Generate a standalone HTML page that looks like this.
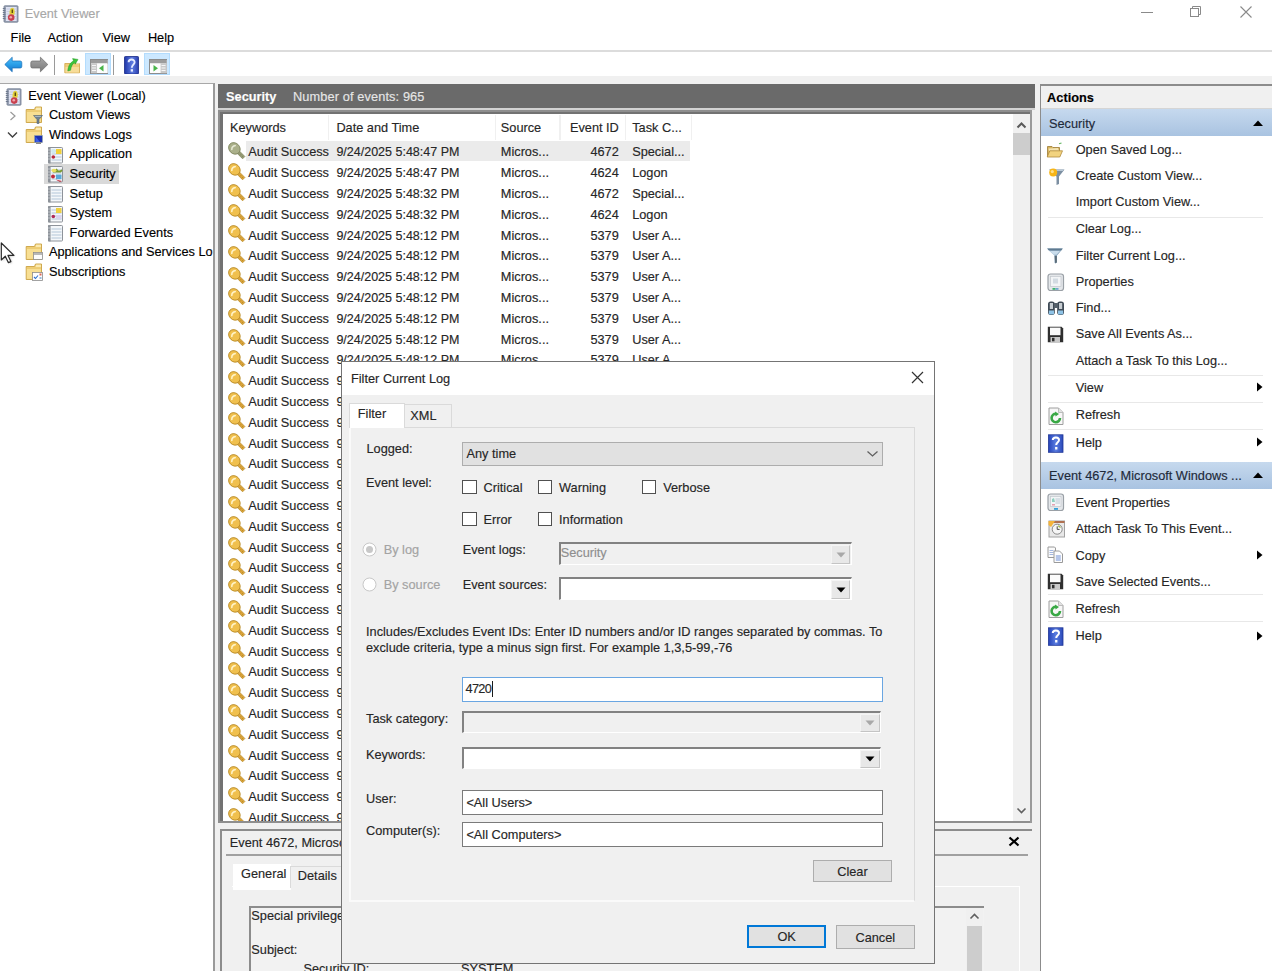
<!DOCTYPE html><html><head><meta charset="utf-8"><style>
html,body{margin:0;padding:0;}
body{width:1272px;height:971px;position:relative;overflow:hidden;background:#fff;font-family:"Liberation Sans",sans-serif;}
.a{position:absolute;box-sizing:border-box;}
.t{position:absolute;white-space:nowrap;line-height:normal;-webkit-text-stroke:0.15px currentColor;}
.clip{position:absolute;overflow:hidden;}
</style></head><body>
<svg class="a" style="left:1.7px;top:4.8px" width="17" height="18" viewBox="0 0 17 18"><rect x="2" y="0.8" width="14" height="16.4" rx="0.8" fill="#9aa3b5" stroke="#6f7a8f" stroke-width="0.8"/>
<rect x="4" y="2" width="10.6" height="14" fill="#dfe3f3"/>
<path d="M4.5 4 H14 M4.5 6.5 H14 M4.5 9 H14 M4.5 11.5 H14 M4.5 14 H14" stroke="#c3cae0" stroke-width="0.9"/>
<path d="M0.8 3.5 h2.6 M0.8 5.5 h2.6 M0.8 7.5 h2.6 M0.8 9.5 h2.6 M0.8 11.5 h2.6 M0.8 13.5 h2.6" stroke="#6f7a8f" stroke-width="1"/>
<path d="M7.8 9.8 C7.1 7 7.8 3 10.3 2.8 C12.8 3 13.1 7 12.3 9.8z" fill="#e2cf3a"/><path d="M9.6 4.5 h1.4 v3.5 h-1.4z" fill="#5a4e10"/>
<circle cx="9.2" cy="12.6" r="3.3" fill="#c8404e"/><circle cx="8.8" cy="12.2" r="1.3" fill="#f2a6ad"/></svg>
<div class="t" style="left:24.8px;top:6.00px;font-size:12.75px;color:#a8a8a8;font-weight:400;">Event Viewer</div>
<div class="a" style="left:1141px;top:12px;width:12px;height:1px;background:#8a8a8a"></div>
<svg class="a" style="left:1189px;top:5px" width="14" height="14" viewBox="0 0 14 14"><rect x="1.5" y="3.5" width="8" height="8" fill="none" stroke="#8a8a8a"/><path d="M3.5 3.5 V1.5 H11.5 V9.5 H9.5" fill="none" stroke="#8a8a8a"/></svg>
<svg class="a" style="left:1239px;top:5px" width="14" height="14" viewBox="0 0 14 14"><path d="M1.5 1.5 L12.5 12.5 M12.5 1.5 L1.5 12.5" stroke="#8a8a8a" stroke-width="1.1"/></svg>
<div class="t" style="left:10.6px;top:30.00px;font-size:12.75px;color:#000;font-weight:400;">File</div>
<div class="t" style="left:47.4px;top:30.00px;font-size:12.75px;color:#000;font-weight:400;">Action</div>
<div class="t" style="left:102.6px;top:30.00px;font-size:12.75px;color:#000;font-weight:400;">View</div>
<div class="t" style="left:147.9px;top:30.00px;font-size:12.75px;color:#000;font-weight:400;">Help</div>
<div class="a" style="left:0px;top:50px;width:1272px;height:2px;background:#dcdcdc"></div>
<svg class="a" style="left:4px;top:56px" width="19" height="18" viewBox="0 0 19 18"><defs><linearGradient id="bk" x1="0" y1="0" x2="0" y2="1"><stop offset="0" stop-color="#4fc0f8"/><stop offset="0.5" stop-color="#2a9ee8"/><stop offset="1" stop-color="#1572c8"/></linearGradient></defs><path d="M0.8 8.5 L8.2 1.2 V5 H16.2 Q17.8 5 17.8 6.8 V10.4 Q17.8 12 16.2 12 H8.2 V15.8 Z" fill="url(#bk)" stroke="#1b6fb8" stroke-width="0.7"/></svg>
<svg class="a" style="left:29.5px;top:56px" width="19" height="18" viewBox="0 0 19 18"><defs><linearGradient id="fw" x1="0" y1="0" x2="0" y2="1"><stop offset="0" stop-color="#a8a8a8"/><stop offset="1" stop-color="#7a7a7a"/></linearGradient></defs><path d="M17.8 8.5 L10.4 1.2 V5 H2.4 Q0.8 5 0.8 6.8 V10.4 Q0.8 12 2.4 12 H10.4 V15.8 Z" fill="url(#fw)" stroke="#6a6a6a" stroke-width="0.7"/></svg>
<div class="a" style="left:54px;top:55px;width:1.2px;height:19.5px;background:#9a9a9a"></div>
<svg class="a" style="left:64px;top:56px" width="17" height="18" viewBox="0 0 17 18"><path d="M0.8 7.5 H15.5 V16.8 H0.8z" fill="#f0cd78" stroke="#cfa548" stroke-width="0.8"/><rect x="1.5" y="11" width="13.5" height="5.5" fill="#f7dc98"/><path d="M12 7.5 h3.5" stroke="#e9d9a9" stroke-width="1.2"/><path d="M3.8 15 C4.2 9.5 6.5 6.5 9.5 4.8 L8.6 2.6 L14 3.4 L11.2 8.2 L10.5 6.4 C8.4 8 7 10.8 6.6 14.2z" fill="#3cc43c" stroke="#259a25" stroke-width="0.5"/></svg>
<div class="a" style="left:85.2px;top:52.8px;width:25.8px;height:22.7px;background:#cce8ff;border:1px solid #b3dcfd"></div>
<svg class="a" style="left:89.5px;top:58.5px" width="18.5" height="15" viewBox="0 0 18.5 15"><rect x="0.5" y="0.5" width="17.5" height="14" fill="#f4f4f4" stroke="#8c8c8c"/><rect x="1" y="1" width="16.5" height="3.2" fill="#9c9c9c"/><rect x="1" y="4.2" width="6" height="10" fill="#c9c9c9"/><path d="M2 6.5 h4 M2 9 h4 M2 11.5 h4" stroke="#f6f6f6" stroke-width="1"/><rect x="7.2" y="4.8" width="10.3" height="9.2" fill="#fdfdfd"/><path d="M13.5 6 L9 9.3 L13.5 12.6z" fill="#49b449"/></svg>
<div class="a" style="left:113px;top:55px;width:1.2px;height:19.5px;background:#9a9a9a"></div>
<svg class="a" style="left:123.5px;top:55.5px" width="15" height="18.5" viewBox="0 0 15 18.5"><defs><linearGradient id="hq" x1="0" x2="1"><stop offset="0" stop-color="#1f36a8"/><stop offset="0.55" stop-color="#5d7be0"/><stop offset="1" stop-color="#2a3fae"/></linearGradient></defs><rect x="0.5" y="0.5" width="14" height="17.5" rx="0.8" fill="url(#hq)" stroke="#182a86" stroke-width="0.8"/><path d="M4.6 6.2 C4.6 2.6 10.6 2.6 10.6 6.2 C10.6 8.6 7.8 8.6 7.8 11.8" fill="none" stroke="#e6ecff" stroke-width="1.9"/><rect x="6.7" y="13.2" width="2.3" height="2.4" fill="#e6ecff"/></svg>
<div class="a" style="left:144.2px;top:52.8px;width:25.5px;height:22.7px;background:#cce8ff;border:1px solid #b3dcfd"></div>
<svg class="a" style="left:148.5px;top:58.5px" width="18.5" height="15" viewBox="0 0 18.5 15"><rect x="0.5" y="0.5" width="17.5" height="14" fill="#f4f4f4" stroke="#8c8c8c"/><rect x="1" y="1" width="16.5" height="3.2" fill="#9c9c9c"/><rect x="11.5" y="4.2" width="6" height="10" fill="#c9c9c9"/><path d="M12.5 6.5 h4 M12.5 9 h4 M12.5 11.5 h4" stroke="#f6f6f6" stroke-width="1"/><rect x="1" y="4.8" width="10.3" height="9.2" fill="#fdfdfd"/><path d="M4.5 6 L9 9.3 L4.5 12.6z" fill="#49b449"/></svg>
<div class="a" style="left:0px;top:76px;width:1272px;height:895px;background:#f0f0f0"></div>
<div class="a" style="left:0px;top:83px;width:215px;height:888px;background:#fff;border-top:1px solid #a8a8a8;border-right:2px solid #9a9a9a"></div>
<svg class="a" style="left:4.5px;top:87.5px" width="17" height="18" viewBox="0 0 17 18"><rect x="2" y="0.8" width="14" height="16.4" rx="0.8" fill="#9aa3b5" stroke="#6f7a8f" stroke-width="0.8"/>
<rect x="4" y="2" width="10.6" height="14" fill="#dfe3f3"/>
<path d="M4.5 4 H14 M4.5 6.5 H14 M4.5 9 H14 M4.5 11.5 H14 M4.5 14 H14" stroke="#c3cae0" stroke-width="0.9"/>
<path d="M0.8 3.5 h2.6 M0.8 5.5 h2.6 M0.8 7.5 h2.6 M0.8 9.5 h2.6 M0.8 11.5 h2.6 M0.8 13.5 h2.6" stroke="#6f7a8f" stroke-width="1"/>
<path d="M7.8 9.8 C7.1 7 7.8 3 10.3 2.8 C12.8 3 13.1 7 12.3 9.8z" fill="#e2cf3a"/><path d="M9.6 4.5 h1.4 v3.5 h-1.4z" fill="#5a4e10"/>
<circle cx="9.2" cy="12.6" r="3.3" fill="#c8404e"/><circle cx="8.8" cy="12.2" r="1.3" fill="#f2a6ad"/></svg>
<div class="t" style="left:28.3px;top:88.00px;font-size:12.75px;color:#000;font-weight:400;">Event Viewer (Local)</div>
<svg class="a" style="left:25px;top:106.1px" width="18" height="18" viewBox="0 0 18 18"><path d="M1.2 3.5 H9.5 L10.5 1 H16.5 V16.5 H1.2 Z" fill="#f3d27c" stroke="#c9a243" stroke-width="0.9"/>
<rect x="10.9" y="1.7" width="5" height="2.4" fill="#fbeab0"/>
<path d="M1.9 5.2 H15.8 V15.8 H1.9 Z" fill="#f8df93"/>
<path d="M1.9 5.2 H15.8" stroke="#e3bf5e" stroke-width="0.8"/><path d="M8.5 9.5 H17.5 L14 13.5 V17.5 H12 V13.5 Z" fill="#6f8190" stroke="#556674" stroke-width="0.6"/><path d="M9.5 10 H16.5 L15.5 11 H10.5z" fill="#a7b7c3"/></svg>
<div class="t" style="left:48.9px;top:107.00px;font-size:12.75px;color:#000;font-weight:400;">Custom Views</div>
<svg class="a" style="left:25px;top:125.69999999999999px" width="18" height="18" viewBox="0 0 18 18"><path d="M1.2 3.5 H9.5 L10.5 1 H16.5 V16.5 H1.2 Z" fill="#f3d27c" stroke="#c9a243" stroke-width="0.9"/>
<rect x="10.9" y="1.7" width="5" height="2.4" fill="#fbeab0"/>
<path d="M1.9 5.2 H15.8 V15.8 H1.9 Z" fill="#f8df93"/>
<path d="M1.9 5.2 H15.8" stroke="#e3bf5e" stroke-width="0.8"/><rect x="9.5" y="9.5" width="8" height="7" fill="#1b2fb0" stroke="#9aa" stroke-width="0.6"/><path d="M10.5 10.5 L15 16 H10.5z" fill="#3a5ee8"/><path d="M11 17.5 H16" stroke="#8a8a8a" stroke-width="1"/></svg>
<div class="t" style="left:48.9px;top:127.00px;font-size:12.75px;color:#000;font-weight:400;">Windows Logs</div>
<svg class="a" style="left:47px;top:145.8px" width="17" height="18" viewBox="0 0 17 18"><rect x="1.5" y="1.5" width="14" height="15.5" rx="0.8" fill="#f4f7fa" stroke="#8e939a" stroke-width="1"/>
<rect x="1" y="1.2" width="2.6" height="16.2" fill="#8e939a"/>
<path d="M1 4 h2.6 M1 7 h2.6 M1 10 h2.6 M1 13 h2.6" stroke="#c9cdd2" stroke-width="0.8"/>
<path d="M4.5 5 H14.5 M4.5 8 H14.5 M4.5 11 H14.5 M4.5 14 H14.5" stroke="#b3c6d8" stroke-width="1"/><rect x="4.5" y="3" width="4" height="4" fill="#cfeaf0"/><rect x="9" y="3" width="5.5" height="5" fill="#f1d038"/><circle cx="6.3" cy="11" r="1.8" fill="#b9283c"/></svg>
<div class="t" style="left:69.6px;top:146.00px;font-size:12.75px;color:#000;font-weight:400;">Application</div>
<div class="a" style="left:44px;top:164.4px;width:75px;height:19.5px;background:#d9d9d9"></div>
<svg class="a" style="left:47px;top:165.4px" width="17" height="18" viewBox="0 0 17 18"><rect x="1.5" y="1.5" width="14" height="15.5" rx="0.8" fill="#f4f7fa" stroke="#8e939a" stroke-width="1"/>
<rect x="1" y="1.2" width="2.6" height="16.2" fill="#8e939a"/>
<path d="M1 4 h2.6 M1 7 h2.6 M1 10 h2.6 M1 13 h2.6" stroke="#c9cdd2" stroke-width="0.8"/>
<path d="M4.5 5 H14.5 M4.5 8 H14.5 M4.5 11 H14.5 M4.5 14 H14.5" stroke="#b3c6d8" stroke-width="1"/><path d="M6 6.5 L13.5 6.5 L15 5 M9 4 L11 6.5" stroke="#7a9a30" stroke-width="1.8" fill="none"/><ellipse cx="7" cy="5.5" rx="2.5" ry="1.8" fill="#e8e060"/><circle cx="6" cy="11.5" r="1.9" fill="#c0283a"/><rect x="9" y="9.5" width="5.5" height="4.5" fill="#5aaad8"/><path d="M8.5 14.5 L15 16 L13 17z" fill="#c03040"/></svg>
<div class="t" style="left:69.6px;top:166.00px;font-size:12.75px;color:#000;font-weight:400;">Security</div>
<svg class="a" style="left:47px;top:185.0px" width="17" height="18" viewBox="0 0 17 18"><rect x="1.5" y="1.5" width="14" height="15.5" rx="0.8" fill="#f4f7fa" stroke="#8e939a" stroke-width="1"/>
<rect x="1" y="1.2" width="2.6" height="16.2" fill="#8e939a"/>
<path d="M1 4 h2.6 M1 7 h2.6 M1 10 h2.6 M1 13 h2.6" stroke="#c9cdd2" stroke-width="0.8"/>
<path d="M4.5 5 H14.5 M4.5 8 H14.5 M4.5 11 H14.5 M4.5 14 H14.5" stroke="#b3c6d8" stroke-width="1"/></svg>
<div class="t" style="left:69.6px;top:186.00px;font-size:12.75px;color:#000;font-weight:400;">Setup</div>
<svg class="a" style="left:47px;top:204.60000000000002px" width="17" height="18" viewBox="0 0 17 18"><rect x="1.5" y="1.5" width="14" height="15.5" rx="0.8" fill="#f4f7fa" stroke="#8e939a" stroke-width="1"/>
<rect x="1" y="1.2" width="2.6" height="16.2" fill="#8e939a"/>
<path d="M1 4 h2.6 M1 7 h2.6 M1 10 h2.6 M1 13 h2.6" stroke="#c9cdd2" stroke-width="0.8"/>
<path d="M4.5 5 H14.5 M4.5 8 H14.5 M4.5 11 H14.5 M4.5 14 H14.5" stroke="#b3c6d8" stroke-width="1"/><rect x="9" y="3" width="5.5" height="5" fill="#efd040"/><circle cx="6.3" cy="11.5" r="1.8" fill="#b02a58"/><rect x="9" y="10" width="5.5" height="4" fill="#d9d4ef"/></svg>
<div class="t" style="left:69.6px;top:205.00px;font-size:12.75px;color:#000;font-weight:400;">System</div>
<svg class="a" style="left:47px;top:224.20000000000002px" width="17" height="18" viewBox="0 0 17 18"><rect x="1.5" y="1.5" width="14" height="15.5" rx="0.8" fill="#f4f7fa" stroke="#8e939a" stroke-width="1"/>
<rect x="1" y="1.2" width="2.6" height="16.2" fill="#8e939a"/>
<path d="M1 4 h2.6 M1 7 h2.6 M1 10 h2.6 M1 13 h2.6" stroke="#c9cdd2" stroke-width="0.8"/>
<path d="M4.5 5 H14.5 M4.5 8 H14.5 M4.5 11 H14.5 M4.5 14 H14.5" stroke="#b3c6d8" stroke-width="1"/></svg>
<div class="t" style="left:69.6px;top:225.00px;font-size:12.75px;color:#000;font-weight:400;">Forwarded Events</div>
<svg class="a" style="left:25px;top:243.3px" width="18" height="18" viewBox="0 0 18 18"><path d="M1.2 3.5 H9.5 L10.5 1 H16.5 V16.5 H1.2 Z" fill="#f3d27c" stroke="#c9a243" stroke-width="0.9"/>
<rect x="10.9" y="1.7" width="5" height="2.4" fill="#fbeab0"/>
<path d="M1.9 5.2 H15.8 V15.8 H1.9 Z" fill="#f8df93"/>
<path d="M1.9 5.2 H15.8" stroke="#e3bf5e" stroke-width="0.8"/><rect x="8.5" y="9.5" width="9" height="7" fill="#fdfdfd" stroke="#8c8c8c" stroke-width="0.8"/><rect x="9" y="10" width="8" height="2" fill="#b9b9b9"/></svg>
<div class="t" style="left:48.9px;top:244.00px;font-size:12.75px;color:#000;font-weight:400;">Applications and Services Lo</div>
<svg class="a" style="left:25px;top:262.9px" width="18" height="18" viewBox="0 0 18 18"><path d="M1.2 3.5 H9.5 L10.5 1 H16.5 V16.5 H1.2 Z" fill="#f3d27c" stroke="#c9a243" stroke-width="0.9"/>
<rect x="10.9" y="1.7" width="5" height="2.4" fill="#fbeab0"/>
<path d="M1.9 5.2 H15.8 V15.8 H1.9 Z" fill="#f8df93"/>
<path d="M1.9 5.2 H15.8" stroke="#e3bf5e" stroke-width="0.8"/><rect x="7.5" y="9.5" width="10" height="8" fill="#fdfdfd" stroke="#8c8c8c" stroke-width="0.8"/><path d="M9 14 l1.5 1.5 l2.5-3" stroke="#2d6fd0" fill="none" stroke-width="1.1"/><rect x="14.5" y="10.5" width="2" height="2" fill="#d65"/><rect x="14.5" y="14" width="2" height="2" fill="#9bd"/></svg>
<div class="t" style="left:48.9px;top:264.00px;font-size:12.75px;color:#000;font-weight:400;">Subscriptions</div>
<svg class="a" style="left:9px;top:111px" width="8" height="10" viewBox="0 0 8 10"><path d="M1.5 1 L6 5 L1.5 9" fill="none" stroke="#9a9a9a" stroke-width="1.2"/></svg>
<svg class="a" style="left:7px;top:131px" width="11" height="8" viewBox="0 0 11 8"><path d="M1 1.5 L5.5 6 L10 1.5" fill="none" stroke="#404040" stroke-width="1.4"/></svg>
<svg class="a" style="left:0px;top:241px" width="20" height="25" viewBox="0 0 20 25"><defs><filter id="cs" x="-30%" y="-30%" width="160%" height="160%"><feGaussianBlur stdDeviation="1.2"/></filter></defs><path d="M2.5 3.5 L2.5 20 L6.5 16.2 L9.5 22.5 L12 21.5 L9.2 15.3 L15 15.3 Z" fill="#000" opacity="0.25" filter="url(#cs)"/><path d="M1.3 2 L1.3 19 L5.3 15.2 L8.3 21.6 L10.9 20.6 L8 14.4 L13.9 14.4 Z" fill="#fff" stroke="#2a2a2a" stroke-width="1.2" stroke-linejoin="round"/></svg>
<div class="a" style="left:218px;top:84px;width:816.6px;height:24px;background:#6a6a6a"></div>
<div class="a" style="left:218px;top:108px;width:816.6px;height:2.2px;background:#d2d2d2"></div>
<div class="t" style="left:226.1px;top:89.00px;font-size:12.75px;color:#fff;font-weight:700;">Security</div>
<div class="t" style="left:293px;top:89.00px;font-size:12.75px;color:#e6e6e6;font-weight:400;letter-spacing:0.12px">Number of events: 965</div>
<div class="a" style="left:218px;top:110px;width:814px;height:713px;background:#8e8e8e"></div>
<div class="a" style="left:220px;top:112px;width:811px;height:709px;background:#fff;border-left:3px solid #727272;border-top:2.5px solid #727272"></div>
<div class="a" style="left:1030px;top:110px;width:2px;height:713px;background:#9a9a9a"></div>
<div class="a" style="left:327.5px;top:114.5px;width:1.5px;height:25.5px;background:#f0f0f0"></div>
<div class="a" style="left:494.8px;top:114.5px;width:1.5px;height:25.5px;background:#f0f0f0"></div>
<div class="a" style="left:559px;top:114.5px;width:1.5px;height:25.5px;background:#f0f0f0"></div>
<div class="a" style="left:624.7px;top:114.5px;width:1.5px;height:25.5px;background:#f0f0f0"></div>
<div class="a" style="left:690.5px;top:114.5px;width:1.5px;height:25.5px;background:#f0f0f0"></div>
<div class="t" style="left:230px;top:120.00px;font-size:12.75px;color:#262626;font-weight:400;">Keywords</div>
<div class="t" style="left:336.4px;top:120.00px;font-size:12.75px;color:#262626;font-weight:400;">Date and Time</div>
<div class="t" style="left:500.8px;top:120.00px;font-size:12.75px;color:#262626;font-weight:400;">Source</div>
<div class="t" style="right:653.2px;top:120.00px;font-size:12.75px;color:#262626;font-weight:400;">Event ID</div>
<div class="t" style="left:632.2px;top:120.00px;font-size:12.75px;color:#262626;font-weight:400;">Task C...</div>
<div class="clip" style="left:223px;top:140px;width:790px;height:681px">
<div class="a" style="left:22.80000000000001px;top:1.1999999999999993px;width:444.7px;height:19.5px;background:#ebebeb"></div>
<svg class="a" style="left:4.5px;top:2.0px" width="18" height="18" viewBox="0 0 18 18">
<path d="M8 10.2 L14.6 16.8 L16.9 14.5 L10.3 7.9 Z" fill="#969b75" stroke="#80865f" stroke-width="0.7"/>
<path d="M11.8 13.6 l1.4 -1.4 M13.6 15.4 l1.4 -1.4" stroke="#80865f" stroke-width="0.8"/>
<ellipse cx="6.4" cy="6.4" rx="5.3" ry="6.2" transform="rotate(-45 6.4 6.4)" fill="#aab08a" stroke="#80865f" stroke-width="0.9"/>
<path d="M3.8 7.5 Q3.8 4 7.2 3.6" stroke="#e4e7d2" stroke-width="1.6" fill="none" stroke-linecap="round"/></svg>
<div class="t" style="left:25.19999999999999px;top:4.00px;font-size:12.75px;color:#262626;font-weight:400;">Audit Success</div>
<div class="t" style="left:113.39999999999998px;top:5.00px;font-size:12.5px;color:#262626;font-weight:400;">9/24/2025 5:48:47 PM</div>
<div class="t" style="left:277.8px;top:4.00px;font-size:12.75px;color:#262626;font-weight:400;">Micros...</div>
<div class="t" style="right:394.20000000000005px;top:4.00px;font-size:12.75px;color:#262626;font-weight:400;">4672</div>
<div class="t" style="left:409.20000000000005px;top:4.00px;font-size:12.75px;color:#262626;font-weight:400;">Special...</div>
<svg class="a" style="left:4.5px;top:22.80000000000001px" width="18" height="18" viewBox="0 0 18 18">
<path d="M8 10.2 L14.6 16.8 L16.9 14.5 L10.3 7.9 Z" fill="#dba43a" stroke="#b98a26" stroke-width="0.7"/>
<path d="M11.8 13.6 l1.4 -1.4 M13.6 15.4 l1.4 -1.4" stroke="#b98a26" stroke-width="0.8"/>
<ellipse cx="6.4" cy="6.4" rx="5.3" ry="6.2" transform="rotate(-45 6.4 6.4)" fill="#f0c04e" stroke="#b98a26" stroke-width="0.9"/>
<path d="M3.8 7.5 Q3.8 4 7.2 3.6" stroke="#fff2c6" stroke-width="1.6" fill="none" stroke-linecap="round"/></svg>
<div class="t" style="left:25.19999999999999px;top:25.00px;font-size:12.75px;color:#262626;font-weight:400;">Audit Success</div>
<div class="t" style="left:113.39999999999998px;top:26.00px;font-size:12.5px;color:#262626;font-weight:400;">9/24/2025 5:48:47 PM</div>
<div class="t" style="left:277.8px;top:25.00px;font-size:12.75px;color:#262626;font-weight:400;">Micros...</div>
<div class="t" style="right:394.20000000000005px;top:25.00px;font-size:12.75px;color:#262626;font-weight:400;">4624</div>
<div class="t" style="left:409.20000000000005px;top:25.00px;font-size:12.75px;color:#262626;font-weight:400;">Logon</div>
<svg class="a" style="left:4.5px;top:43.599999999999994px" width="18" height="18" viewBox="0 0 18 18">
<path d="M8 10.2 L14.6 16.8 L16.9 14.5 L10.3 7.9 Z" fill="#dba43a" stroke="#b98a26" stroke-width="0.7"/>
<path d="M11.8 13.6 l1.4 -1.4 M13.6 15.4 l1.4 -1.4" stroke="#b98a26" stroke-width="0.8"/>
<ellipse cx="6.4" cy="6.4" rx="5.3" ry="6.2" transform="rotate(-45 6.4 6.4)" fill="#f0c04e" stroke="#b98a26" stroke-width="0.9"/>
<path d="M3.8 7.5 Q3.8 4 7.2 3.6" stroke="#fff2c6" stroke-width="1.6" fill="none" stroke-linecap="round"/></svg>
<div class="t" style="left:25.19999999999999px;top:46.00px;font-size:12.75px;color:#262626;font-weight:400;">Audit Success</div>
<div class="t" style="left:113.39999999999998px;top:47.00px;font-size:12.5px;color:#262626;font-weight:400;">9/24/2025 5:48:32 PM</div>
<div class="t" style="left:277.8px;top:46.00px;font-size:12.75px;color:#262626;font-weight:400;">Micros...</div>
<div class="t" style="right:394.20000000000005px;top:46.00px;font-size:12.75px;color:#262626;font-weight:400;">4672</div>
<div class="t" style="left:409.20000000000005px;top:46.00px;font-size:12.75px;color:#262626;font-weight:400;">Special...</div>
<svg class="a" style="left:4.5px;top:64.4px" width="18" height="18" viewBox="0 0 18 18">
<path d="M8 10.2 L14.6 16.8 L16.9 14.5 L10.3 7.9 Z" fill="#dba43a" stroke="#b98a26" stroke-width="0.7"/>
<path d="M11.8 13.6 l1.4 -1.4 M13.6 15.4 l1.4 -1.4" stroke="#b98a26" stroke-width="0.8"/>
<ellipse cx="6.4" cy="6.4" rx="5.3" ry="6.2" transform="rotate(-45 6.4 6.4)" fill="#f0c04e" stroke="#b98a26" stroke-width="0.9"/>
<path d="M3.8 7.5 Q3.8 4 7.2 3.6" stroke="#fff2c6" stroke-width="1.6" fill="none" stroke-linecap="round"/></svg>
<div class="t" style="left:25.19999999999999px;top:67.00px;font-size:12.75px;color:#262626;font-weight:400;">Audit Success</div>
<div class="t" style="left:113.39999999999998px;top:68.00px;font-size:12.5px;color:#262626;font-weight:400;">9/24/2025 5:48:32 PM</div>
<div class="t" style="left:277.8px;top:67.00px;font-size:12.75px;color:#262626;font-weight:400;">Micros...</div>
<div class="t" style="right:394.20000000000005px;top:67.00px;font-size:12.75px;color:#262626;font-weight:400;">4624</div>
<div class="t" style="left:409.20000000000005px;top:67.00px;font-size:12.75px;color:#262626;font-weight:400;">Logon</div>
<svg class="a" style="left:4.5px;top:85.19999999999999px" width="18" height="18" viewBox="0 0 18 18">
<path d="M8 10.2 L14.6 16.8 L16.9 14.5 L10.3 7.9 Z" fill="#dba43a" stroke="#b98a26" stroke-width="0.7"/>
<path d="M11.8 13.6 l1.4 -1.4 M13.6 15.4 l1.4 -1.4" stroke="#b98a26" stroke-width="0.8"/>
<ellipse cx="6.4" cy="6.4" rx="5.3" ry="6.2" transform="rotate(-45 6.4 6.4)" fill="#f0c04e" stroke="#b98a26" stroke-width="0.9"/>
<path d="M3.8 7.5 Q3.8 4 7.2 3.6" stroke="#fff2c6" stroke-width="1.6" fill="none" stroke-linecap="round"/></svg>
<div class="t" style="left:25.19999999999999px;top:88.00px;font-size:12.75px;color:#262626;font-weight:400;">Audit Success</div>
<div class="t" style="left:113.39999999999998px;top:89.00px;font-size:12.5px;color:#262626;font-weight:400;">9/24/2025 5:48:12 PM</div>
<div class="t" style="left:277.8px;top:88.00px;font-size:12.75px;color:#262626;font-weight:400;">Micros...</div>
<div class="t" style="right:394.20000000000005px;top:88.00px;font-size:12.75px;color:#262626;font-weight:400;">5379</div>
<div class="t" style="left:409.20000000000005px;top:88.00px;font-size:12.75px;color:#262626;font-weight:400;">User A...</div>
<svg class="a" style="left:4.5px;top:106.0px" width="18" height="18" viewBox="0 0 18 18">
<path d="M8 10.2 L14.6 16.8 L16.9 14.5 L10.3 7.9 Z" fill="#dba43a" stroke="#b98a26" stroke-width="0.7"/>
<path d="M11.8 13.6 l1.4 -1.4 M13.6 15.4 l1.4 -1.4" stroke="#b98a26" stroke-width="0.8"/>
<ellipse cx="6.4" cy="6.4" rx="5.3" ry="6.2" transform="rotate(-45 6.4 6.4)" fill="#f0c04e" stroke="#b98a26" stroke-width="0.9"/>
<path d="M3.8 7.5 Q3.8 4 7.2 3.6" stroke="#fff2c6" stroke-width="1.6" fill="none" stroke-linecap="round"/></svg>
<div class="t" style="left:25.19999999999999px;top:108.00px;font-size:12.75px;color:#262626;font-weight:400;">Audit Success</div>
<div class="t" style="left:113.39999999999998px;top:109.00px;font-size:12.5px;color:#262626;font-weight:400;">9/24/2025 5:48:12 PM</div>
<div class="t" style="left:277.8px;top:108.00px;font-size:12.75px;color:#262626;font-weight:400;">Micros...</div>
<div class="t" style="right:394.20000000000005px;top:108.00px;font-size:12.75px;color:#262626;font-weight:400;">5379</div>
<div class="t" style="left:409.20000000000005px;top:108.00px;font-size:12.75px;color:#262626;font-weight:400;">User A...</div>
<svg class="a" style="left:4.5px;top:126.80000000000001px" width="18" height="18" viewBox="0 0 18 18">
<path d="M8 10.2 L14.6 16.8 L16.9 14.5 L10.3 7.9 Z" fill="#dba43a" stroke="#b98a26" stroke-width="0.7"/>
<path d="M11.8 13.6 l1.4 -1.4 M13.6 15.4 l1.4 -1.4" stroke="#b98a26" stroke-width="0.8"/>
<ellipse cx="6.4" cy="6.4" rx="5.3" ry="6.2" transform="rotate(-45 6.4 6.4)" fill="#f0c04e" stroke="#b98a26" stroke-width="0.9"/>
<path d="M3.8 7.5 Q3.8 4 7.2 3.6" stroke="#fff2c6" stroke-width="1.6" fill="none" stroke-linecap="round"/></svg>
<div class="t" style="left:25.19999999999999px;top:129.00px;font-size:12.75px;color:#262626;font-weight:400;">Audit Success</div>
<div class="t" style="left:113.39999999999998px;top:130.00px;font-size:12.5px;color:#262626;font-weight:400;">9/24/2025 5:48:12 PM</div>
<div class="t" style="left:277.8px;top:129.00px;font-size:12.75px;color:#262626;font-weight:400;">Micros...</div>
<div class="t" style="right:394.20000000000005px;top:129.00px;font-size:12.75px;color:#262626;font-weight:400;">5379</div>
<div class="t" style="left:409.20000000000005px;top:129.00px;font-size:12.75px;color:#262626;font-weight:400;">User A...</div>
<svg class="a" style="left:4.5px;top:147.60000000000002px" width="18" height="18" viewBox="0 0 18 18">
<path d="M8 10.2 L14.6 16.8 L16.9 14.5 L10.3 7.9 Z" fill="#dba43a" stroke="#b98a26" stroke-width="0.7"/>
<path d="M11.8 13.6 l1.4 -1.4 M13.6 15.4 l1.4 -1.4" stroke="#b98a26" stroke-width="0.8"/>
<ellipse cx="6.4" cy="6.4" rx="5.3" ry="6.2" transform="rotate(-45 6.4 6.4)" fill="#f0c04e" stroke="#b98a26" stroke-width="0.9"/>
<path d="M3.8 7.5 Q3.8 4 7.2 3.6" stroke="#fff2c6" stroke-width="1.6" fill="none" stroke-linecap="round"/></svg>
<div class="t" style="left:25.19999999999999px;top:150.00px;font-size:12.75px;color:#262626;font-weight:400;">Audit Success</div>
<div class="t" style="left:113.39999999999998px;top:151.00px;font-size:12.5px;color:#262626;font-weight:400;">9/24/2025 5:48:12 PM</div>
<div class="t" style="left:277.8px;top:150.00px;font-size:12.75px;color:#262626;font-weight:400;">Micros...</div>
<div class="t" style="right:394.20000000000005px;top:150.00px;font-size:12.75px;color:#262626;font-weight:400;">5379</div>
<div class="t" style="left:409.20000000000005px;top:150.00px;font-size:12.75px;color:#262626;font-weight:400;">User A...</div>
<svg class="a" style="left:4.5px;top:168.39999999999998px" width="18" height="18" viewBox="0 0 18 18">
<path d="M8 10.2 L14.6 16.8 L16.9 14.5 L10.3 7.9 Z" fill="#dba43a" stroke="#b98a26" stroke-width="0.7"/>
<path d="M11.8 13.6 l1.4 -1.4 M13.6 15.4 l1.4 -1.4" stroke="#b98a26" stroke-width="0.8"/>
<ellipse cx="6.4" cy="6.4" rx="5.3" ry="6.2" transform="rotate(-45 6.4 6.4)" fill="#f0c04e" stroke="#b98a26" stroke-width="0.9"/>
<path d="M3.8 7.5 Q3.8 4 7.2 3.6" stroke="#fff2c6" stroke-width="1.6" fill="none" stroke-linecap="round"/></svg>
<div class="t" style="left:25.19999999999999px;top:171.00px;font-size:12.75px;color:#262626;font-weight:400;">Audit Success</div>
<div class="t" style="left:113.39999999999998px;top:172.00px;font-size:12.5px;color:#262626;font-weight:400;">9/24/2025 5:48:12 PM</div>
<div class="t" style="left:277.8px;top:171.00px;font-size:12.75px;color:#262626;font-weight:400;">Micros...</div>
<div class="t" style="right:394.20000000000005px;top:171.00px;font-size:12.75px;color:#262626;font-weight:400;">5379</div>
<div class="t" style="left:409.20000000000005px;top:171.00px;font-size:12.75px;color:#262626;font-weight:400;">User A...</div>
<svg class="a" style="left:4.5px;top:189.20000000000005px" width="18" height="18" viewBox="0 0 18 18">
<path d="M8 10.2 L14.6 16.8 L16.9 14.5 L10.3 7.9 Z" fill="#dba43a" stroke="#b98a26" stroke-width="0.7"/>
<path d="M11.8 13.6 l1.4 -1.4 M13.6 15.4 l1.4 -1.4" stroke="#b98a26" stroke-width="0.8"/>
<ellipse cx="6.4" cy="6.4" rx="5.3" ry="6.2" transform="rotate(-45 6.4 6.4)" fill="#f0c04e" stroke="#b98a26" stroke-width="0.9"/>
<path d="M3.8 7.5 Q3.8 4 7.2 3.6" stroke="#fff2c6" stroke-width="1.6" fill="none" stroke-linecap="round"/></svg>
<div class="t" style="left:25.19999999999999px;top:192.00px;font-size:12.75px;color:#262626;font-weight:400;">Audit Success</div>
<div class="t" style="left:113.39999999999998px;top:193.00px;font-size:12.5px;color:#262626;font-weight:400;">9/24/2025 5:48:12 PM</div>
<div class="t" style="left:277.8px;top:192.00px;font-size:12.75px;color:#262626;font-weight:400;">Micros...</div>
<div class="t" style="right:394.20000000000005px;top:192.00px;font-size:12.75px;color:#262626;font-weight:400;">5379</div>
<div class="t" style="left:409.20000000000005px;top:192.00px;font-size:12.75px;color:#262626;font-weight:400;">User A...</div>
<svg class="a" style="left:4.5px;top:210.0px" width="18" height="18" viewBox="0 0 18 18">
<path d="M8 10.2 L14.6 16.8 L16.9 14.5 L10.3 7.9 Z" fill="#dba43a" stroke="#b98a26" stroke-width="0.7"/>
<path d="M11.8 13.6 l1.4 -1.4 M13.6 15.4 l1.4 -1.4" stroke="#b98a26" stroke-width="0.8"/>
<ellipse cx="6.4" cy="6.4" rx="5.3" ry="6.2" transform="rotate(-45 6.4 6.4)" fill="#f0c04e" stroke="#b98a26" stroke-width="0.9"/>
<path d="M3.8 7.5 Q3.8 4 7.2 3.6" stroke="#fff2c6" stroke-width="1.6" fill="none" stroke-linecap="round"/></svg>
<div class="t" style="left:25.19999999999999px;top:212.00px;font-size:12.75px;color:#262626;font-weight:400;">Audit Success</div>
<div class="t" style="left:113.39999999999998px;top:213.00px;font-size:12.5px;color:#262626;font-weight:400;">9/24/2025 5:48:12 PM</div>
<div class="t" style="left:277.8px;top:212.00px;font-size:12.75px;color:#262626;font-weight:400;">Micros...</div>
<div class="t" style="right:394.20000000000005px;top:212.00px;font-size:12.75px;color:#262626;font-weight:400;">5379</div>
<div class="t" style="left:409.20000000000005px;top:212.00px;font-size:12.75px;color:#262626;font-weight:400;">User A...</div>
<svg class="a" style="left:4.5px;top:230.8px" width="18" height="18" viewBox="0 0 18 18">
<path d="M8 10.2 L14.6 16.8 L16.9 14.5 L10.3 7.9 Z" fill="#dba43a" stroke="#b98a26" stroke-width="0.7"/>
<path d="M11.8 13.6 l1.4 -1.4 M13.6 15.4 l1.4 -1.4" stroke="#b98a26" stroke-width="0.8"/>
<ellipse cx="6.4" cy="6.4" rx="5.3" ry="6.2" transform="rotate(-45 6.4 6.4)" fill="#f0c04e" stroke="#b98a26" stroke-width="0.9"/>
<path d="M3.8 7.5 Q3.8 4 7.2 3.6" stroke="#fff2c6" stroke-width="1.6" fill="none" stroke-linecap="round"/></svg>
<div class="t" style="left:25.19999999999999px;top:233.00px;font-size:12.75px;color:#262626;font-weight:400;">Audit Success</div>
<div class="t" style="left:113.39999999999998px;top:234.00px;font-size:12.5px;color:#262626;font-weight:400;">9/24/2025 5:48:12 PM</div>
<svg class="a" style="left:4.5px;top:251.60000000000002px" width="18" height="18" viewBox="0 0 18 18">
<path d="M8 10.2 L14.6 16.8 L16.9 14.5 L10.3 7.9 Z" fill="#dba43a" stroke="#b98a26" stroke-width="0.7"/>
<path d="M11.8 13.6 l1.4 -1.4 M13.6 15.4 l1.4 -1.4" stroke="#b98a26" stroke-width="0.8"/>
<ellipse cx="6.4" cy="6.4" rx="5.3" ry="6.2" transform="rotate(-45 6.4 6.4)" fill="#f0c04e" stroke="#b98a26" stroke-width="0.9"/>
<path d="M3.8 7.5 Q3.8 4 7.2 3.6" stroke="#fff2c6" stroke-width="1.6" fill="none" stroke-linecap="round"/></svg>
<div class="t" style="left:25.19999999999999px;top:254.00px;font-size:12.75px;color:#262626;font-weight:400;">Audit Success</div>
<div class="t" style="left:113.39999999999998px;top:255.00px;font-size:12.5px;color:#262626;font-weight:400;">9/24/2025 5:48:12 PM</div>
<svg class="a" style="left:4.5px;top:272.40000000000003px" width="18" height="18" viewBox="0 0 18 18">
<path d="M8 10.2 L14.6 16.8 L16.9 14.5 L10.3 7.9 Z" fill="#dba43a" stroke="#b98a26" stroke-width="0.7"/>
<path d="M11.8 13.6 l1.4 -1.4 M13.6 15.4 l1.4 -1.4" stroke="#b98a26" stroke-width="0.8"/>
<ellipse cx="6.4" cy="6.4" rx="5.3" ry="6.2" transform="rotate(-45 6.4 6.4)" fill="#f0c04e" stroke="#b98a26" stroke-width="0.9"/>
<path d="M3.8 7.5 Q3.8 4 7.2 3.6" stroke="#fff2c6" stroke-width="1.6" fill="none" stroke-linecap="round"/></svg>
<div class="t" style="left:25.19999999999999px;top:275.00px;font-size:12.75px;color:#262626;font-weight:400;">Audit Success</div>
<div class="t" style="left:113.39999999999998px;top:276.00px;font-size:12.5px;color:#262626;font-weight:400;">9/24/2025 5:48:12 PM</div>
<svg class="a" style="left:4.5px;top:293.2px" width="18" height="18" viewBox="0 0 18 18">
<path d="M8 10.2 L14.6 16.8 L16.9 14.5 L10.3 7.9 Z" fill="#dba43a" stroke="#b98a26" stroke-width="0.7"/>
<path d="M11.8 13.6 l1.4 -1.4 M13.6 15.4 l1.4 -1.4" stroke="#b98a26" stroke-width="0.8"/>
<ellipse cx="6.4" cy="6.4" rx="5.3" ry="6.2" transform="rotate(-45 6.4 6.4)" fill="#f0c04e" stroke="#b98a26" stroke-width="0.9"/>
<path d="M3.8 7.5 Q3.8 4 7.2 3.6" stroke="#fff2c6" stroke-width="1.6" fill="none" stroke-linecap="round"/></svg>
<div class="t" style="left:25.19999999999999px;top:296.00px;font-size:12.75px;color:#262626;font-weight:400;">Audit Success</div>
<div class="t" style="left:113.39999999999998px;top:297.00px;font-size:12.5px;color:#262626;font-weight:400;">9/24/2025 5:48:12 PM</div>
<svg class="a" style="left:4.5px;top:314.0px" width="18" height="18" viewBox="0 0 18 18">
<path d="M8 10.2 L14.6 16.8 L16.9 14.5 L10.3 7.9 Z" fill="#dba43a" stroke="#b98a26" stroke-width="0.7"/>
<path d="M11.8 13.6 l1.4 -1.4 M13.6 15.4 l1.4 -1.4" stroke="#b98a26" stroke-width="0.8"/>
<ellipse cx="6.4" cy="6.4" rx="5.3" ry="6.2" transform="rotate(-45 6.4 6.4)" fill="#f0c04e" stroke="#b98a26" stroke-width="0.9"/>
<path d="M3.8 7.5 Q3.8 4 7.2 3.6" stroke="#fff2c6" stroke-width="1.6" fill="none" stroke-linecap="round"/></svg>
<div class="t" style="left:25.19999999999999px;top:316.00px;font-size:12.75px;color:#262626;font-weight:400;">Audit Success</div>
<div class="t" style="left:113.39999999999998px;top:317.00px;font-size:12.5px;color:#262626;font-weight:400;">9/24/2025 5:48:12 PM</div>
<svg class="a" style="left:4.5px;top:334.8px" width="18" height="18" viewBox="0 0 18 18">
<path d="M8 10.2 L14.6 16.8 L16.9 14.5 L10.3 7.9 Z" fill="#dba43a" stroke="#b98a26" stroke-width="0.7"/>
<path d="M11.8 13.6 l1.4 -1.4 M13.6 15.4 l1.4 -1.4" stroke="#b98a26" stroke-width="0.8"/>
<ellipse cx="6.4" cy="6.4" rx="5.3" ry="6.2" transform="rotate(-45 6.4 6.4)" fill="#f0c04e" stroke="#b98a26" stroke-width="0.9"/>
<path d="M3.8 7.5 Q3.8 4 7.2 3.6" stroke="#fff2c6" stroke-width="1.6" fill="none" stroke-linecap="round"/></svg>
<div class="t" style="left:25.19999999999999px;top:337.00px;font-size:12.75px;color:#262626;font-weight:400;">Audit Success</div>
<div class="t" style="left:113.39999999999998px;top:338.00px;font-size:12.5px;color:#262626;font-weight:400;">9/24/2025 5:48:12 PM</div>
<svg class="a" style="left:4.5px;top:355.6px" width="18" height="18" viewBox="0 0 18 18">
<path d="M8 10.2 L14.6 16.8 L16.9 14.5 L10.3 7.9 Z" fill="#dba43a" stroke="#b98a26" stroke-width="0.7"/>
<path d="M11.8 13.6 l1.4 -1.4 M13.6 15.4 l1.4 -1.4" stroke="#b98a26" stroke-width="0.8"/>
<ellipse cx="6.4" cy="6.4" rx="5.3" ry="6.2" transform="rotate(-45 6.4 6.4)" fill="#f0c04e" stroke="#b98a26" stroke-width="0.9"/>
<path d="M3.8 7.5 Q3.8 4 7.2 3.6" stroke="#fff2c6" stroke-width="1.6" fill="none" stroke-linecap="round"/></svg>
<div class="t" style="left:25.19999999999999px;top:358.00px;font-size:12.75px;color:#262626;font-weight:400;">Audit Success</div>
<div class="t" style="left:113.39999999999998px;top:359.00px;font-size:12.5px;color:#262626;font-weight:400;">9/24/2025 5:48:12 PM</div>
<svg class="a" style="left:4.5px;top:376.4000000000001px" width="18" height="18" viewBox="0 0 18 18">
<path d="M8 10.2 L14.6 16.8 L16.9 14.5 L10.3 7.9 Z" fill="#dba43a" stroke="#b98a26" stroke-width="0.7"/>
<path d="M11.8 13.6 l1.4 -1.4 M13.6 15.4 l1.4 -1.4" stroke="#b98a26" stroke-width="0.8"/>
<ellipse cx="6.4" cy="6.4" rx="5.3" ry="6.2" transform="rotate(-45 6.4 6.4)" fill="#f0c04e" stroke="#b98a26" stroke-width="0.9"/>
<path d="M3.8 7.5 Q3.8 4 7.2 3.6" stroke="#fff2c6" stroke-width="1.6" fill="none" stroke-linecap="round"/></svg>
<div class="t" style="left:25.19999999999999px;top:379.00px;font-size:12.75px;color:#262626;font-weight:400;">Audit Success</div>
<div class="t" style="left:113.39999999999998px;top:380.00px;font-size:12.5px;color:#262626;font-weight:400;">9/24/2025 5:48:12 PM</div>
<svg class="a" style="left:4.5px;top:397.20000000000005px" width="18" height="18" viewBox="0 0 18 18">
<path d="M8 10.2 L14.6 16.8 L16.9 14.5 L10.3 7.9 Z" fill="#dba43a" stroke="#b98a26" stroke-width="0.7"/>
<path d="M11.8 13.6 l1.4 -1.4 M13.6 15.4 l1.4 -1.4" stroke="#b98a26" stroke-width="0.8"/>
<ellipse cx="6.4" cy="6.4" rx="5.3" ry="6.2" transform="rotate(-45 6.4 6.4)" fill="#f0c04e" stroke="#b98a26" stroke-width="0.9"/>
<path d="M3.8 7.5 Q3.8 4 7.2 3.6" stroke="#fff2c6" stroke-width="1.6" fill="none" stroke-linecap="round"/></svg>
<div class="t" style="left:25.19999999999999px;top:400.00px;font-size:12.75px;color:#262626;font-weight:400;">Audit Success</div>
<div class="t" style="left:113.39999999999998px;top:401.00px;font-size:12.5px;color:#262626;font-weight:400;">9/24/2025 5:48:12 PM</div>
<svg class="a" style="left:4.5px;top:418.0px" width="18" height="18" viewBox="0 0 18 18">
<path d="M8 10.2 L14.6 16.8 L16.9 14.5 L10.3 7.9 Z" fill="#dba43a" stroke="#b98a26" stroke-width="0.7"/>
<path d="M11.8 13.6 l1.4 -1.4 M13.6 15.4 l1.4 -1.4" stroke="#b98a26" stroke-width="0.8"/>
<ellipse cx="6.4" cy="6.4" rx="5.3" ry="6.2" transform="rotate(-45 6.4 6.4)" fill="#f0c04e" stroke="#b98a26" stroke-width="0.9"/>
<path d="M3.8 7.5 Q3.8 4 7.2 3.6" stroke="#fff2c6" stroke-width="1.6" fill="none" stroke-linecap="round"/></svg>
<div class="t" style="left:25.19999999999999px;top:420.00px;font-size:12.75px;color:#262626;font-weight:400;">Audit Success</div>
<div class="t" style="left:113.39999999999998px;top:421.00px;font-size:12.5px;color:#262626;font-weight:400;">9/24/2025 5:48:12 PM</div>
<svg class="a" style="left:4.5px;top:438.79999999999995px" width="18" height="18" viewBox="0 0 18 18">
<path d="M8 10.2 L14.6 16.8 L16.9 14.5 L10.3 7.9 Z" fill="#dba43a" stroke="#b98a26" stroke-width="0.7"/>
<path d="M11.8 13.6 l1.4 -1.4 M13.6 15.4 l1.4 -1.4" stroke="#b98a26" stroke-width="0.8"/>
<ellipse cx="6.4" cy="6.4" rx="5.3" ry="6.2" transform="rotate(-45 6.4 6.4)" fill="#f0c04e" stroke="#b98a26" stroke-width="0.9"/>
<path d="M3.8 7.5 Q3.8 4 7.2 3.6" stroke="#fff2c6" stroke-width="1.6" fill="none" stroke-linecap="round"/></svg>
<div class="t" style="left:25.19999999999999px;top:441.00px;font-size:12.75px;color:#262626;font-weight:400;">Audit Success</div>
<div class="t" style="left:113.39999999999998px;top:442.00px;font-size:12.5px;color:#262626;font-weight:400;">9/24/2025 5:48:12 PM</div>
<svg class="a" style="left:4.5px;top:459.6px" width="18" height="18" viewBox="0 0 18 18">
<path d="M8 10.2 L14.6 16.8 L16.9 14.5 L10.3 7.9 Z" fill="#dba43a" stroke="#b98a26" stroke-width="0.7"/>
<path d="M11.8 13.6 l1.4 -1.4 M13.6 15.4 l1.4 -1.4" stroke="#b98a26" stroke-width="0.8"/>
<ellipse cx="6.4" cy="6.4" rx="5.3" ry="6.2" transform="rotate(-45 6.4 6.4)" fill="#f0c04e" stroke="#b98a26" stroke-width="0.9"/>
<path d="M3.8 7.5 Q3.8 4 7.2 3.6" stroke="#fff2c6" stroke-width="1.6" fill="none" stroke-linecap="round"/></svg>
<div class="t" style="left:25.19999999999999px;top:462.00px;font-size:12.75px;color:#262626;font-weight:400;">Audit Success</div>
<div class="t" style="left:113.39999999999998px;top:463.00px;font-size:12.5px;color:#262626;font-weight:400;">9/24/2025 5:48:12 PM</div>
<svg class="a" style="left:4.5px;top:480.4000000000001px" width="18" height="18" viewBox="0 0 18 18">
<path d="M8 10.2 L14.6 16.8 L16.9 14.5 L10.3 7.9 Z" fill="#dba43a" stroke="#b98a26" stroke-width="0.7"/>
<path d="M11.8 13.6 l1.4 -1.4 M13.6 15.4 l1.4 -1.4" stroke="#b98a26" stroke-width="0.8"/>
<ellipse cx="6.4" cy="6.4" rx="5.3" ry="6.2" transform="rotate(-45 6.4 6.4)" fill="#f0c04e" stroke="#b98a26" stroke-width="0.9"/>
<path d="M3.8 7.5 Q3.8 4 7.2 3.6" stroke="#fff2c6" stroke-width="1.6" fill="none" stroke-linecap="round"/></svg>
<div class="t" style="left:25.19999999999999px;top:483.00px;font-size:12.75px;color:#262626;font-weight:400;">Audit Success</div>
<div class="t" style="left:113.39999999999998px;top:484.00px;font-size:12.5px;color:#262626;font-weight:400;">9/24/2025 5:48:12 PM</div>
<svg class="a" style="left:4.5px;top:501.20000000000005px" width="18" height="18" viewBox="0 0 18 18">
<path d="M8 10.2 L14.6 16.8 L16.9 14.5 L10.3 7.9 Z" fill="#dba43a" stroke="#b98a26" stroke-width="0.7"/>
<path d="M11.8 13.6 l1.4 -1.4 M13.6 15.4 l1.4 -1.4" stroke="#b98a26" stroke-width="0.8"/>
<ellipse cx="6.4" cy="6.4" rx="5.3" ry="6.2" transform="rotate(-45 6.4 6.4)" fill="#f0c04e" stroke="#b98a26" stroke-width="0.9"/>
<path d="M3.8 7.5 Q3.8 4 7.2 3.6" stroke="#fff2c6" stroke-width="1.6" fill="none" stroke-linecap="round"/></svg>
<div class="t" style="left:25.19999999999999px;top:504.00px;font-size:12.75px;color:#262626;font-weight:400;">Audit Success</div>
<div class="t" style="left:113.39999999999998px;top:505.00px;font-size:12.5px;color:#262626;font-weight:400;">9/24/2025 5:48:12 PM</div>
<svg class="a" style="left:4.5px;top:522.0px" width="18" height="18" viewBox="0 0 18 18">
<path d="M8 10.2 L14.6 16.8 L16.9 14.5 L10.3 7.9 Z" fill="#dba43a" stroke="#b98a26" stroke-width="0.7"/>
<path d="M11.8 13.6 l1.4 -1.4 M13.6 15.4 l1.4 -1.4" stroke="#b98a26" stroke-width="0.8"/>
<ellipse cx="6.4" cy="6.4" rx="5.3" ry="6.2" transform="rotate(-45 6.4 6.4)" fill="#f0c04e" stroke="#b98a26" stroke-width="0.9"/>
<path d="M3.8 7.5 Q3.8 4 7.2 3.6" stroke="#fff2c6" stroke-width="1.6" fill="none" stroke-linecap="round"/></svg>
<div class="t" style="left:25.19999999999999px;top:524.00px;font-size:12.75px;color:#262626;font-weight:400;">Audit Success</div>
<div class="t" style="left:113.39999999999998px;top:525.00px;font-size:12.5px;color:#262626;font-weight:400;">9/24/2025 5:48:12 PM</div>
<svg class="a" style="left:4.5px;top:542.8000000000001px" width="18" height="18" viewBox="0 0 18 18">
<path d="M8 10.2 L14.6 16.8 L16.9 14.5 L10.3 7.9 Z" fill="#dba43a" stroke="#b98a26" stroke-width="0.7"/>
<path d="M11.8 13.6 l1.4 -1.4 M13.6 15.4 l1.4 -1.4" stroke="#b98a26" stroke-width="0.8"/>
<ellipse cx="6.4" cy="6.4" rx="5.3" ry="6.2" transform="rotate(-45 6.4 6.4)" fill="#f0c04e" stroke="#b98a26" stroke-width="0.9"/>
<path d="M3.8 7.5 Q3.8 4 7.2 3.6" stroke="#fff2c6" stroke-width="1.6" fill="none" stroke-linecap="round"/></svg>
<div class="t" style="left:25.19999999999999px;top:545.00px;font-size:12.75px;color:#262626;font-weight:400;">Audit Success</div>
<div class="t" style="left:113.39999999999998px;top:546.00px;font-size:12.5px;color:#262626;font-weight:400;">9/24/2025 5:48:12 PM</div>
<svg class="a" style="left:4.5px;top:563.6px" width="18" height="18" viewBox="0 0 18 18">
<path d="M8 10.2 L14.6 16.8 L16.9 14.5 L10.3 7.9 Z" fill="#dba43a" stroke="#b98a26" stroke-width="0.7"/>
<path d="M11.8 13.6 l1.4 -1.4 M13.6 15.4 l1.4 -1.4" stroke="#b98a26" stroke-width="0.8"/>
<ellipse cx="6.4" cy="6.4" rx="5.3" ry="6.2" transform="rotate(-45 6.4 6.4)" fill="#f0c04e" stroke="#b98a26" stroke-width="0.9"/>
<path d="M3.8 7.5 Q3.8 4 7.2 3.6" stroke="#fff2c6" stroke-width="1.6" fill="none" stroke-linecap="round"/></svg>
<div class="t" style="left:25.19999999999999px;top:566.00px;font-size:12.75px;color:#262626;font-weight:400;">Audit Success</div>
<div class="t" style="left:113.39999999999998px;top:567.00px;font-size:12.5px;color:#262626;font-weight:400;">9/24/2025 5:48:12 PM</div>
<svg class="a" style="left:4.5px;top:584.4px" width="18" height="18" viewBox="0 0 18 18">
<path d="M8 10.2 L14.6 16.8 L16.9 14.5 L10.3 7.9 Z" fill="#dba43a" stroke="#b98a26" stroke-width="0.7"/>
<path d="M11.8 13.6 l1.4 -1.4 M13.6 15.4 l1.4 -1.4" stroke="#b98a26" stroke-width="0.8"/>
<ellipse cx="6.4" cy="6.4" rx="5.3" ry="6.2" transform="rotate(-45 6.4 6.4)" fill="#f0c04e" stroke="#b98a26" stroke-width="0.9"/>
<path d="M3.8 7.5 Q3.8 4 7.2 3.6" stroke="#fff2c6" stroke-width="1.6" fill="none" stroke-linecap="round"/></svg>
<div class="t" style="left:25.19999999999999px;top:587.00px;font-size:12.75px;color:#262626;font-weight:400;">Audit Success</div>
<div class="t" style="left:113.39999999999998px;top:588.00px;font-size:12.5px;color:#262626;font-weight:400;">9/24/2025 5:48:12 PM</div>
<svg class="a" style="left:4.5px;top:605.2px" width="18" height="18" viewBox="0 0 18 18">
<path d="M8 10.2 L14.6 16.8 L16.9 14.5 L10.3 7.9 Z" fill="#dba43a" stroke="#b98a26" stroke-width="0.7"/>
<path d="M11.8 13.6 l1.4 -1.4 M13.6 15.4 l1.4 -1.4" stroke="#b98a26" stroke-width="0.8"/>
<ellipse cx="6.4" cy="6.4" rx="5.3" ry="6.2" transform="rotate(-45 6.4 6.4)" fill="#f0c04e" stroke="#b98a26" stroke-width="0.9"/>
<path d="M3.8 7.5 Q3.8 4 7.2 3.6" stroke="#fff2c6" stroke-width="1.6" fill="none" stroke-linecap="round"/></svg>
<div class="t" style="left:25.19999999999999px;top:608.00px;font-size:12.75px;color:#262626;font-weight:400;">Audit Success</div>
<div class="t" style="left:113.39999999999998px;top:609.00px;font-size:12.5px;color:#262626;font-weight:400;">9/24/2025 5:48:12 PM</div>
<svg class="a" style="left:4.5px;top:626.0px" width="18" height="18" viewBox="0 0 18 18">
<path d="M8 10.2 L14.6 16.8 L16.9 14.5 L10.3 7.9 Z" fill="#dba43a" stroke="#b98a26" stroke-width="0.7"/>
<path d="M11.8 13.6 l1.4 -1.4 M13.6 15.4 l1.4 -1.4" stroke="#b98a26" stroke-width="0.8"/>
<ellipse cx="6.4" cy="6.4" rx="5.3" ry="6.2" transform="rotate(-45 6.4 6.4)" fill="#f0c04e" stroke="#b98a26" stroke-width="0.9"/>
<path d="M3.8 7.5 Q3.8 4 7.2 3.6" stroke="#fff2c6" stroke-width="1.6" fill="none" stroke-linecap="round"/></svg>
<div class="t" style="left:25.19999999999999px;top:628.00px;font-size:12.75px;color:#262626;font-weight:400;">Audit Success</div>
<div class="t" style="left:113.39999999999998px;top:629.00px;font-size:12.5px;color:#262626;font-weight:400;">9/24/2025 5:48:12 PM</div>
<svg class="a" style="left:4.5px;top:646.8000000000001px" width="18" height="18" viewBox="0 0 18 18">
<path d="M8 10.2 L14.6 16.8 L16.9 14.5 L10.3 7.9 Z" fill="#dba43a" stroke="#b98a26" stroke-width="0.7"/>
<path d="M11.8 13.6 l1.4 -1.4 M13.6 15.4 l1.4 -1.4" stroke="#b98a26" stroke-width="0.8"/>
<ellipse cx="6.4" cy="6.4" rx="5.3" ry="6.2" transform="rotate(-45 6.4 6.4)" fill="#f0c04e" stroke="#b98a26" stroke-width="0.9"/>
<path d="M3.8 7.5 Q3.8 4 7.2 3.6" stroke="#fff2c6" stroke-width="1.6" fill="none" stroke-linecap="round"/></svg>
<div class="t" style="left:25.19999999999999px;top:649.00px;font-size:12.75px;color:#262626;font-weight:400;">Audit Success</div>
<div class="t" style="left:113.39999999999998px;top:650.00px;font-size:12.5px;color:#262626;font-weight:400;">9/24/2025 5:48:12 PM</div>
<svg class="a" style="left:4.5px;top:667.6px" width="18" height="18" viewBox="0 0 18 18">
<path d="M8 10.2 L14.6 16.8 L16.9 14.5 L10.3 7.9 Z" fill="#dba43a" stroke="#b98a26" stroke-width="0.7"/>
<path d="M11.8 13.6 l1.4 -1.4 M13.6 15.4 l1.4 -1.4" stroke="#b98a26" stroke-width="0.8"/>
<ellipse cx="6.4" cy="6.4" rx="5.3" ry="6.2" transform="rotate(-45 6.4 6.4)" fill="#f0c04e" stroke="#b98a26" stroke-width="0.9"/>
<path d="M3.8 7.5 Q3.8 4 7.2 3.6" stroke="#fff2c6" stroke-width="1.6" fill="none" stroke-linecap="round"/></svg>
<div class="t" style="left:25.19999999999999px;top:670.00px;font-size:12.75px;color:#262626;font-weight:400;">Audit Success</div>
<div class="t" style="left:113.39999999999998px;top:671.00px;font-size:12.5px;color:#262626;font-weight:400;">9/24/2025 5:48:12 PM</div>
</div>
<div class="a" style="left:1013px;top:114px;width:17px;height:707px;background:#f0f0f0"></div>
<svg class="a" style="left:1016px;top:120.5px" width="11" height="8" viewBox="0 0 11 8"><path d="M1.5 6.5 L5.5 2.5 L9.5 6.5" fill="none" stroke="#5a5a5a" stroke-width="2"/></svg>
<div class="a" style="left:1013px;top:133.3px;width:17px;height:22px;background:#cdcdcd"></div>
<svg class="a" style="left:1016px;top:807px" width="11" height="8" viewBox="0 0 11 8"><path d="M1.5 1.5 L5.5 5.5 L9.5 1.5" fill="none" stroke="#606060" stroke-width="1.6"/></svg>
<div class="a" style="left:220px;top:828.5px;width:812px;height:143px;background:#f0f0f0;border-top:2px solid #8c8c8c;border-left:2.5px solid #8c8c8c"></div>
<div class="t" style="left:229.8px;top:835.00px;font-size:12.75px;color:#262626;font-weight:400;">Event 4672, Microsoft Windows security auditing.</div>
<div class="a" style="left:226px;top:853.5px;width:802px;height:2px;background:#a0a0a0"></div>
<svg class="a" style="left:1008px;top:836px" width="12" height="11" viewBox="0 0 12 11"><path d="M1.5 1.5 L10.5 9.5 M10.5 1.5 L1.5 9.5" stroke="#000" stroke-width="2.2"/></svg>
<div class="a" style="left:232px;top:886px;width:788px;height:85px;border-top:1px solid #fff;border-right:1px solid #fff;background:#f0f0f0"></div>
<div class="a" style="left:232.6px;top:863.6px;width:58px;height:26px;background:#fff"></div>
<div class="t" style="left:241px;top:866.00px;font-size:12.75px;color:#262626;font-weight:400;">General</div>
<div class="a" style="left:290px;top:866px;width:60px;height:22px;background:#f0f0f0;border:1px solid #dadada;border-bottom:none"></div>
<div class="t" style="left:297.8px;top:868.00px;font-size:12.75px;color:#262626;font-weight:400;">Details</div>
<div class="a" style="left:248.5px;top:905.7px;width:735px;height:70px;background:#f2f2f2;border-top:2px solid #8c8c8c;border-left:2px solid #8c8c8c"></div>
<div class="t" style="left:251.3px;top:908.00px;font-size:12.75px;color:#262626;font-weight:400;">Special privileges assigned to new logon.</div>
<div class="t" style="left:251.3px;top:942.00px;font-size:12.75px;color:#262626;font-weight:400;">Subject:</div>
<div class="t" style="left:303.4px;top:961.00px;font-size:12.75px;color:#262626;font-weight:400;">Security ID:</div>
<div class="t" style="left:461px;top:961.00px;font-size:12.75px;color:#262626;font-weight:400;">SYSTEM</div>
<div class="a" style="left:966px;top:907.5px;width:17px;height:64px;background:#f0f0f0"></div>
<svg class="a" style="left:969px;top:912px" width="11" height="8" viewBox="0 0 11 8"><path d="M1.5 6.5 L5.5 2.5 L9.5 6.5" fill="none" stroke="#606060" stroke-width="1.6"/></svg>
<div class="a" style="left:967px;top:926px;width:15px;height:45px;background:#cdcdcd"></div>
<div class="a" style="left:1039.5px;top:84px;width:232.5px;height:887px;background:#fff;border-top:2px solid #8c8c8c;border-left:1.8px solid #8c8c8c"></div>
<div class="a" style="left:1041.3px;top:86px;width:231px;height:22px;background:#f0f0f0"></div>
<div class="a" style="left:1041.3px;top:108px;width:231px;height:1px;background:#d5d5d5"></div>
<div class="t" style="left:1047.1px;top:90.00px;font-size:12.75px;color:#000;font-weight:700;">Actions</div>
<div class="a" style="left:1041.3px;top:109px;width:231px;height:27px;background:linear-gradient(#c6d9ee,#a9c3e1)"></div>
<div class="t" style="left:1049px;top:116.00px;font-size:12.75px;color:#1e2a3a;font-weight:400;">Security</div>
<svg class="a" style="left:1252px;top:118.5px" width="12" height="8" viewBox="0 0 12 8"><path d="M1 7 L6 1.5 L11 7z" fill="#000"/></svg>
<svg class="a" style="left:1046px;top:142.0px" width="18" height="18" viewBox="0 0 18 18"><path d="M1.5 4.5 H6 L7 5.5 H13.5 V14.5 H1.5z" fill="#d9b55c" stroke="#9c7a35" stroke-width="0.8"/><path d="M2.5 6.5 L12 6 L13 9 H3z" fill="#f3e3b3"/><path d="M1.2 15 L3.8 8.8 H16.5 L13.8 15z" fill="#f2d37f" stroke="#b08a3c" stroke-width="0.8"/><path d="M13 1.8 L15.5 1" stroke="#62b562" stroke-width="1.2"/></svg>
<div class="t" style="left:1075.7px;top:142.00px;font-size:12.75px;color:#262626;font-weight:400;">Open Saved Log...</div>
<svg class="a" style="left:1047.5px;top:168.0px" width="18" height="18" viewBox="0 0 18 18"><path d="M1 1.5 H16.5 L11 8.5 V16 L8.5 17 V8.5z" fill="#7c8fa2"/><path d="M2 1.8 H15.5 L14.8 3 H2.8z" fill="#b9c8d6"/><circle cx="5.2" cy="4.6" r="4" fill="#f8b516"/><circle cx="4.3" cy="3.6" r="1.6" fill="#ffe08a"/></svg>
<div class="t" style="left:1075.7px;top:168.00px;font-size:12.75px;color:#262626;font-weight:400;">Create Custom View...</div>
<div class="t" style="left:1075.7px;top:194.00px;font-size:12.75px;color:#262626;font-weight:400;">Import Custom View...</div>
<div class="t" style="left:1075.7px;top:221.00px;font-size:12.75px;color:#262626;font-weight:400;">Clear Log...</div>
<svg class="a" style="left:1046px;top:247.39999999999998px" width="18" height="18" viewBox="0 0 18 18"><path d="M0.8 1.5 H17 L11 8.5 V15.5 L9.2 16.5 L8.5 15.5 V8.5z" fill="#8aa6bd"/><path d="M1.5 1.5 H16.5 L15.5 3.2 H2.5z" fill="#5f7a90"/><path d="M3.5 4 H14 L10.5 7.8 H7.5z" fill="#c9dceb"/><path d="M8.6 9 H10.8 V15.5 L9.2 16.3z" fill="#5b6b78"/></svg>
<div class="t" style="left:1075.7px;top:248.00px;font-size:12.75px;color:#262626;font-weight:400;">Filter Current Log...</div>
<svg class="a" style="left:1046.5px;top:273.4px" width="18" height="19" viewBox="0 0 18 19"><rect x="1" y="1" width="15.5" height="16.5" rx="2.5" fill="#e4e7ea" stroke="#9aa0a6" stroke-width="1.2"/><rect x="3.5" y="3.5" width="10.5" height="10" fill="#f3f5f7" stroke="#c2c7cc" stroke-width="0.7"/><rect x="6" y="5.5" width="5" height="5" fill="#d3dbe2"/><rect x="5.5" y="15" width="3" height="1.8" fill="#3db36a"/><rect x="8.5" y="15" width="3" height="1.8" fill="#6fa8d0"/></svg>
<div class="t" style="left:1075.7px;top:274.00px;font-size:12.75px;color:#262626;font-weight:400;">Properties</div>
<svg class="a" style="left:1046.5px;top:299.3px" width="18" height="19" viewBox="0 0 18 19"><rect x="1" y="2.5" width="6.8" height="13.5" rx="2.8" fill="#3f4a55"/><rect x="10.2" y="2.5" width="6.8" height="13.5" rx="2.8" fill="#3f4a55"/><rect x="2.8" y="4" width="3.2" height="6" fill="#c7cdd2"/><rect x="12" y="4" width="3.2" height="6" fill="#c7cdd2"/><rect x="7" y="4" width="4" height="5" fill="#56616b"/><rect x="1.8" y="11.5" width="5.2" height="4" fill="#8fc3e6"/><rect x="11" y="11.5" width="5.2" height="4" fill="#8fc3e6"/></svg>
<div class="t" style="left:1075.7px;top:300.00px;font-size:12.75px;color:#262626;font-weight:400;">Find...</div>
<svg class="a" style="left:1047.2px;top:326.0px" width="17" height="17" viewBox="0 0 17 17"><path d="M0.8 0.8 H14.5 L16.2 2.5 V16.2 H0.8z" fill="#2f2f2f"/><rect x="3" y="1.6" width="10.5" height="7.6" fill="#fbfbfb"/><rect x="3.5" y="11" width="9.5" height="5.2" fill="#c9c9c9"/><rect x="5" y="11.8" width="2.5" height="3.5" fill="#2f2f2f"/></svg>
<div class="t" style="left:1075.7px;top:326.00px;font-size:12.75px;color:#262626;font-weight:400;">Save All Events As...</div>
<div class="t" style="left:1075.7px;top:353.00px;font-size:12.75px;color:#262626;font-weight:400;">Attach a Task To this Log...</div>
<div class="t" style="left:1075.7px;top:380.00px;font-size:12.75px;color:#262626;font-weight:400;">View</div>
<svg class="a" style="left:1048px;top:406.59999999999997px" width="17" height="19" viewBox="0 0 17 19"><path d="M1 1 H10.5 L15 5.5 V17.5 H1z" fill="#f7f7f7" stroke="#9e9e9e" stroke-width="1"/><path d="M10.5 1 V5.5 H15" fill="#e2e2e2" stroke="#b0b0b0" stroke-width="0.8"/><path d="M12 11 A4.2 4.2 0 1 1 8 6.8" fill="none" stroke="#39a845" stroke-width="2.6"/><path d="M7 4.5 L11 7 L7.5 9.5z" fill="#39a845"/></svg>
<div class="t" style="left:1075.7px;top:407.00px;font-size:12.75px;color:#262626;font-weight:400;">Refresh</div>
<svg class="a" style="left:1047.5px;top:433.7px" width="16" height="19" viewBox="0 0 16 19"><defs><linearGradient id="hg" x1="0" x2="1"><stop offset="0" stop-color="#2442b8"/><stop offset="0.5" stop-color="#5a7de0"/><stop offset="1" stop-color="#2a48b8"/></linearGradient></defs><rect x="0.5" y="0.8" width="14.5" height="17.5" fill="url(#hg)" stroke="#1f3596" stroke-width="0.8"/><path d="M4.8 6 C4.8 2.5 11 2.5 11 6 C11 8.2 8.2 8.2 8.2 11" fill="none" stroke="#fff" stroke-width="2"/><rect x="7.1" y="13" width="2.3" height="2.5" fill="#fff"/></svg>
<div class="t" style="left:1075.7px;top:435.00px;font-size:12.75px;color:#262626;font-weight:400;">Help</div>
<div class="a" style="left:1048px;top:216.5px;width:215px;height:1px;background:#e8e8e8"></div>
<div class="a" style="left:1048px;top:374.5px;width:215px;height:1px;background:#e8e8e8"></div>
<div class="a" style="left:1048px;top:402px;width:215px;height:1px;background:#e8e8e8"></div>
<div class="a" style="left:1048px;top:429px;width:215px;height:1px;background:#e8e8e8"></div>
<svg class="a" style="left:1256px;top:382.2px" width="7" height="10" viewBox="0 0 7 10"><path d="M1 0.5 L6.5 5 L1 9.5z" fill="#000"/></svg>
<svg class="a" style="left:1256px;top:437.2px" width="7" height="10" viewBox="0 0 7 10"><path d="M1 0.5 L6.5 5 L1 9.5z" fill="#000"/></svg>
<div class="a" style="left:1041.3px;top:462.4px;width:231px;height:26.200000000000045px;background:linear-gradient(#c6d9ee,#a9c3e1)"></div>
<div class="t" style="left:1049px;top:468.00px;font-size:12.75px;color:#1e2a3a;font-weight:400;">Event 4672, Microsoft Windows ...</div>
<svg class="a" style="left:1252px;top:470.5px" width="12" height="8" viewBox="0 0 12 8"><path d="M1 7 L6 1.5 L11 7z" fill="#000"/></svg>
<svg class="a" style="left:1046.5px;top:493.3px" width="18" height="19" viewBox="0 0 18 19"><rect x="1" y="1" width="15.5" height="16.5" rx="2.5" fill="#e4e7ea" stroke="#9aa0a6" stroke-width="1.2"/><rect x="3.5" y="3.5" width="10.5" height="10" fill="#f3f5f7" stroke="#c2c7cc" stroke-width="0.7"/><path d="M5 6 L7 5 L8 9 H5z" fill="#8fd0c0"/><path d="M8.5 6 H13 M8.5 8 H13 M8.5 10 H13" stroke="#b8c6d0" stroke-width="0.9"/><rect x="5" y="11" width="3" height="1.5" fill="#e6a0b0"/><rect x="7" y="15" width="4" height="1.8" fill="#35a0d8"/></svg>
<div class="t" style="left:1075.5px;top:495.00px;font-size:12.75px;color:#262626;font-weight:400;">Event Properties</div>
<svg class="a" style="left:1047.5px;top:519.9px" width="18" height="18" viewBox="0 0 18 18"><rect x="1" y="1" width="15.5" height="16" fill="#e8e8e8" stroke="#a2a2a2" stroke-width="1"/><path d="M1 1 H16.5 V3 H1z" fill="#b07050"/><path d="M0.5 1 H7 L3 7 L0.5 5z" fill="#f4b43a"/><circle cx="9.2" cy="9.2" r="5" fill="#f6f6f6" stroke="#8a8a8a" stroke-width="1"/><path d="M9.2 6.3 V9.4 H11.6" stroke="#4b4b4b" fill="none" stroke-width="1"/><path d="M10.2 5.8 L12.5 7.5" stroke="#9ab840" stroke-width="1.3"/></svg>
<div class="t" style="left:1075.5px;top:521.00px;font-size:12.75px;color:#262626;font-weight:400;">Attach Task To This Event...</div>
<svg class="a" style="left:1046.5px;top:546.4000000000001px" width="18" height="18" viewBox="0 0 18 18"><path d="M1 1 H7.5 L8.5 2 V11.5 H1z" fill="#fbfbfb" stroke="#9a9a9a" stroke-width="1"/><path d="M2.5 4.5 H6.5 M2.5 6.5 H6.5 M2.5 8.5 H6.5" stroke="#8ea6d8" stroke-width="0.8"/><path d="M7 5 H12.5 L15.5 8 V16.5 H7z" fill="#fdfdfd" stroke="#9a9a9a" stroke-width="1"/><path d="M8.8 10 H13.8 M8.8 12 H13.8 M8.8 14 H13.8" stroke="#6f8fd6" stroke-width="1"/></svg>
<div class="t" style="left:1075.5px;top:548.00px;font-size:12.75px;color:#262626;font-weight:400;">Copy</div>
<svg class="a" style="left:1047.2px;top:573.4px" width="17" height="17" viewBox="0 0 17 17"><path d="M0.8 0.8 H14.5 L16.2 2.5 V16.2 H0.8z" fill="#2f2f2f"/><rect x="3" y="1.6" width="10.5" height="7.6" fill="#fbfbfb"/><rect x="3.5" y="11" width="9.5" height="5.2" fill="#c9c9c9"/><rect x="5" y="11.8" width="2.5" height="3.5" fill="#2f2f2f"/></svg>
<div class="t" style="left:1075.5px;top:574.00px;font-size:12.75px;color:#262626;font-weight:400;">Save Selected Events...</div>
<svg class="a" style="left:1048px;top:599.9000000000001px" width="17" height="19" viewBox="0 0 17 19"><path d="M1 1 H10.5 L15 5.5 V17.5 H1z" fill="#f7f7f7" stroke="#9e9e9e" stroke-width="1"/><path d="M10.5 1 V5.5 H15" fill="#e2e2e2" stroke="#b0b0b0" stroke-width="0.8"/><path d="M12 11 A4.2 4.2 0 1 1 8 6.8" fill="none" stroke="#39a845" stroke-width="2.6"/><path d="M7 4.5 L11 7 L7.5 9.5z" fill="#39a845"/></svg>
<div class="t" style="left:1075.5px;top:601.00px;font-size:12.75px;color:#262626;font-weight:400;">Refresh</div>
<svg class="a" style="left:1047.5px;top:627.0px" width="16" height="19" viewBox="0 0 16 19"><defs><linearGradient id="hg" x1="0" x2="1"><stop offset="0" stop-color="#2442b8"/><stop offset="0.5" stop-color="#5a7de0"/><stop offset="1" stop-color="#2a48b8"/></linearGradient></defs><rect x="0.5" y="0.8" width="14.5" height="17.5" fill="url(#hg)" stroke="#1f3596" stroke-width="0.8"/><path d="M4.8 6 C4.8 2.5 11 2.5 11 6 C11 8.2 8.2 8.2 8.2 11" fill="none" stroke="#fff" stroke-width="2"/><rect x="7.1" y="13" width="2.3" height="2.5" fill="#fff"/></svg>
<div class="t" style="left:1075.5px;top:628.00px;font-size:12.75px;color:#262626;font-weight:400;">Help</div>
<div class="a" style="left:1048px;top:594px;width:215px;height:1px;background:#e8e8e8"></div>
<div class="a" style="left:1048px;top:621px;width:215px;height:1px;background:#e8e8e8"></div>
<svg class="a" style="left:1256px;top:550.2px" width="7" height="10" viewBox="0 0 7 10"><path d="M1 0.5 L6.5 5 L1 9.5z" fill="#000"/></svg>
<svg class="a" style="left:1256px;top:630.5px" width="7" height="10" viewBox="0 0 7 10"><path d="M1 0.5 L6.5 5 L1 9.5z" fill="#000"/></svg>
<div class="a" style="left:340.8px;top:361px;width:594.2px;height:603px;background:#f0f0f0;border:1.3px solid #747474"></div>
<div class="a" style="left:342px;top:362px;width:592px;height:33px;background:#fff"></div>
<div class="t" style="left:351px;top:371.00px;font-size:12.75px;color:#262626;font-weight:400;">Filter Current Log</div>
<svg class="a" style="left:911px;top:371px" width="13" height="13" viewBox="0 0 13 13"><path d="M1 1 L12 12 M12 1 L1 12" stroke="#333" stroke-width="1.2"/></svg>
<div class="a" style="left:349px;top:427px;width:566px;height:474.5px;background:#f0f0f0;border:1px solid #dadada;border-left:2px solid #fafafa;border-bottom:2px solid #fafafa"></div>
<div class="a" style="left:404px;top:404.4px;width:48px;height:23px;background:#f0f0f0;border:1px solid #dadada;border-bottom:none"></div>
<div class="t" style="left:410.3px;top:408.00px;font-size:12.75px;color:#262626;font-weight:400;">XML</div>
<div class="a" style="left:348.5px;top:403px;width:56px;height:25px;background:#fff;border:1px solid #dadada;border-bottom:none"></div>
<div class="t" style="left:357.8px;top:406.00px;font-size:12.75px;color:#262626;font-weight:400;">Filter</div>
<div class="t" style="left:366.5px;top:441.00px;font-size:12.75px;color:#262626;font-weight:400;">Logged:</div>
<div class="a" style="left:462px;top:441.5px;width:421px;height:24.5px;background:#e1e1e1;border:1px solid #adadad"></div>
<div class="t" style="left:466.5px;top:446.00px;font-size:12.75px;color:#262626;font-weight:400;">Any time</div>
<svg class="a" style="left:866px;top:450px" width="13" height="8" viewBox="0 0 13 8"><path d="M1.5 1.5 L6.5 6 L11.5 1.5" fill="none" stroke="#606060" stroke-width="1.3"/></svg>
<div class="t" style="left:366px;top:475.00px;font-size:12.75px;color:#262626;font-weight:400;">Event level:</div>
<div class="a" style="left:462px;top:479.5px;width:14.5px;height:14.5px;background:#fff;border:1.2px solid #505050"></div>
<div class="t" style="left:483.5px;top:480.00px;font-size:12.75px;color:#262626;font-weight:400;">Critical</div>
<div class="a" style="left:537.5px;top:479.5px;width:14.5px;height:14.5px;background:#fff;border:1.2px solid #505050"></div>
<div class="t" style="left:559.0px;top:480.00px;font-size:12.75px;color:#262626;font-weight:400;">Warning</div>
<div class="a" style="left:641.7px;top:479.5px;width:14.5px;height:14.5px;background:#fff;border:1.2px solid #505050"></div>
<div class="t" style="left:663.2px;top:480.00px;font-size:12.75px;color:#262626;font-weight:400;">Verbose</div>
<div class="a" style="left:462px;top:511.5px;width:14.5px;height:14.5px;background:#fff;border:1.2px solid #505050"></div>
<div class="t" style="left:483.5px;top:512.00px;font-size:12.75px;color:#262626;font-weight:400;">Error</div>
<div class="a" style="left:537.5px;top:511.5px;width:14.5px;height:14.5px;background:#fff;border:1.2px solid #505050"></div>
<div class="t" style="left:559.0px;top:512.00px;font-size:12.75px;color:#262626;font-weight:400;">Information</div>
<svg class="a" style="left:362px;top:542px" width="15" height="15" viewBox="0 0 15 15"><circle cx="7.5" cy="7.5" r="6.5" fill="#fff" stroke="#c8c8c8"/><circle cx="7.5" cy="7.5" r="3.5" fill="#c8c8c8"/></svg>
<div class="t" style="left:383.7px;top:542.00px;font-size:12.75px;color:#a3a3a3;font-weight:400;">By log</div>
<svg class="a" style="left:362px;top:577px" width="15" height="15" viewBox="0 0 15 15"><circle cx="7.5" cy="7.5" r="6.5" fill="#fff" stroke="#c8c8c8"/></svg>
<div class="t" style="left:383.7px;top:577.00px;font-size:12.75px;color:#a3a3a3;font-weight:400;">By source</div>
<div class="t" style="left:462.7px;top:542.00px;font-size:12.75px;color:#262626;font-weight:400;">Event logs:</div>
<div class="t" style="left:462.7px;top:577.00px;font-size:12.75px;color:#262626;font-weight:400;">Event sources:</div>
<div class="a" style="left:558.7px;top:542px;width:293px;height:23px;background:#f0f0f0;border-top:2px solid #828282;border-left:2px solid #828282;border-bottom:1px solid #fff;border-right:1px solid #fff"></div>
<div class="a" style="left:830.7px;top:545px;width:19.5px;height:19px;background:#e8e8e8;border:1px solid #c4c4c4;border-top-color:#f4f4f4;border-left-color:#f4f4f4"></div>
<svg class="a" style="left:835.7px;top:551.5px" width="10" height="6" viewBox="0 0 10 6"><path d="M0.5 0.5 H9.5 L5 5.5z" fill="#a8a8a8"/></svg>
<div class="t" style="left:560.7px;top:545.00px;font-size:12.75px;color:#8e8e8e;font-weight:400;">Security</div>
<div class="a" style="left:558.7px;top:577.3px;width:293px;height:22.5px;background:#fff;border-top:2px solid #828282;border-left:2px solid #828282;border-bottom:1px solid #fff;border-right:1px solid #fff"></div>
<div class="a" style="left:830.7px;top:580.3px;width:19.5px;height:18.5px;background:#e8e8e8;border:1px solid #c4c4c4;border-top-color:#f4f4f4;border-left-color:#f4f4f4"></div>
<svg class="a" style="left:835.7px;top:586.55px" width="10" height="6" viewBox="0 0 10 6"><path d="M0.5 0.5 H9.5 L5 5.5z" fill="#000"/></svg>
<div class="t" style="left:366px;top:624.00px;font-size:12.75px;color:#262626;font-weight:400;">Includes/Excludes Event IDs: Enter ID numbers and/or ID ranges separated by commas. To</div>
<div class="t" style="left:366px;top:640.00px;font-size:12.75px;color:#262626;font-weight:400;">exclude criteria, type a minus sign first. For example 1,3,5-99,-76</div>
<div class="a" style="left:462px;top:676.5px;width:420.5px;height:25px;background:#fff;border:1.5px solid #6aa6e2"></div>
<div class="t" style="left:465.4px;top:681.00px;font-size:12.75px;color:#262626;font-weight:400;letter-spacing:-0.6px">4720</div>
<div class="a" style="left:491.6px;top:680.5px;width:1.4px;height:16.5px;background:#1a1a1a"></div>
<div class="t" style="left:366px;top:711.00px;font-size:12.75px;color:#262626;font-weight:400;">Task category:</div>
<div class="a" style="left:462px;top:710.5px;width:419px;height:22px;background:#f0f0f0;border-top:2px solid #828282;border-left:2px solid #828282;border-bottom:1px solid #fff;border-right:1px solid #fff"></div>
<div class="a" style="left:860px;top:713.5px;width:19.5px;height:18px;background:#e8e8e8;border:1px solid #c4c4c4;border-top-color:#f4f4f4;border-left-color:#f4f4f4"></div>
<svg class="a" style="left:865px;top:719.5px" width="10" height="6" viewBox="0 0 10 6"><path d="M0.5 0.5 H9.5 L5 5.5z" fill="#a8a8a8"/></svg>
<div class="t" style="left:366px;top:747.00px;font-size:12.75px;color:#262626;font-weight:400;">Keywords:</div>
<div class="a" style="left:462px;top:747px;width:419px;height:21.5px;background:#fff;border-top:2px solid #828282;border-left:2px solid #828282;border-bottom:1px solid #fff;border-right:1px solid #fff"></div>
<div class="a" style="left:860px;top:750px;width:19.5px;height:17.5px;background:#e8e8e8;border:1px solid #c4c4c4;border-top-color:#f4f4f4;border-left-color:#f4f4f4"></div>
<svg class="a" style="left:865px;top:755.75px" width="10" height="6" viewBox="0 0 10 6"><path d="M0.5 0.5 H9.5 L5 5.5z" fill="#000"/></svg>
<div class="t" style="left:366px;top:791.00px;font-size:12.75px;color:#262626;font-weight:400;">User:</div>
<div class="a" style="left:462px;top:790.2px;width:420.5px;height:24.5px;background:#fff;border:1px solid #7a7a7a"></div>
<div class="t" style="left:466.4px;top:795.00px;font-size:12.75px;color:#262626;font-weight:400;">&lt;All Users&gt;</div>
<div class="t" style="left:366px;top:823.00px;font-size:12.75px;color:#262626;font-weight:400;">Computer(s):</div>
<div class="a" style="left:462px;top:822.3px;width:420.5px;height:24.5px;background:#fff;border:1px solid #7a7a7a"></div>
<div class="t" style="left:466.4px;top:827.00px;font-size:12.75px;color:#262626;font-weight:400;">&lt;All Computers&gt;</div>
<div class="a" style="left:812.7px;top:860.4px;width:79.5px;height:22px;background:#e1e1e1;border:1px solid #adadad"></div>
<div class="t" style="left:752.45px;width:200px;text-align:center;top:864.00px;font-size:12.75px;color:#262626;font-weight:400;">Clear</div>
<div class="a" style="left:747px;top:924.7px;width:79.3px;height:23.7px;background:#e1e1e1;border:2px solid #0078d7"></div>
<div class="t" style="left:686.65px;width:200px;text-align:center;top:929.00px;font-size:12.75px;color:#262626;font-weight:400;">OK</div>
<div class="a" style="left:835.5px;top:924.7px;width:79.6px;height:24.6px;background:#e1e1e1;border:1px solid #adadad"></div>
<div class="t" style="left:775.3px;width:200px;text-align:center;top:930.00px;font-size:12.75px;color:#262626;font-weight:400;">Cancel</div>
</body></html>
